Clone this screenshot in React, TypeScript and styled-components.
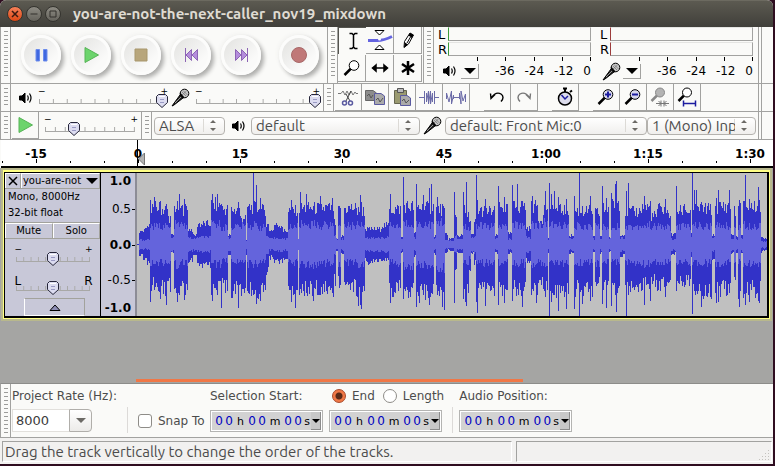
import React from 'react';
import styled, { createGlobalStyle, css } from 'styled-components';

const ui = '"Ubuntu", "Noto Sans", "Open Sans", sans-serif';
const mono = '"DejaVu Sans", sans-serif';
const line = '#a2a2a0';
const paper = '#fafaf8';
const lilac = '#c8c8d8';

const uri = (s: string) => `url("data:image/svg+xml,${encodeURIComponent(s)}")`;
const thumbArt = uri(
  '<svg xmlns="http://www.w3.org/2000/svg" width="12" height="14"><path d="M2.5 .5H9.5L11.5 2.5V8.5L6 13.5L.5 8.5V2.5Z" fill="#dcdcf0" stroke="#26263a"/><path d="M3 2.5H9" stroke="#fff"/><path d="M4 5.5H8M4 8.5H8" stroke="#9a9ac4"/></svg>'
);
const arrowsArt = uri(
  '<svg xmlns="http://www.w3.org/2000/svg" width="20" height="15"><path d="M.5 1V14" stroke="#dcdad6"/><path d="M7 5L10 2L13 5ZM7 10L10 13L13 10Z" fill="#6c6a66"/></svg>'
);

const Global = createGlobalStyle`
  * { box-sizing: border-box; }
  body { margin: 0; background: #2f0d20; font-family: ${mono}; font-size: 12px; color: #000; }
  button, input, select { font: inherit; color: inherit; margin: 0; padding: 0; border: 0; border-radius: 0; }
  svg { display: block; flex: none; }
`;

const Desktop = styled.div`
  min-height: 100vh;
  display: flex;
  padding: 0 2px 2px 0;
  background: #2f0d20;
`;
const Frame = styled.main`
  flex: 1;
  min-width: 0;
  display: flex;
  flex-direction: column;
  background: ${paper};
  border-radius: 6px 6px 0 0;
  overflow: hidden;
`;
const TitleBar = styled.header`
  height: 27px;
  flex: none;
  display: flex;
  align-items: center;
  gap: 3px;
  padding-left: 7px;
  background: linear-gradient(#5c5a51, #403f3a);
  border-top: 1px solid #6c6a60;
`;
const Title = styled.h1`
  margin: 0 0 0 9px;
  font: bold 15px/20px ${ui};
  color: #dfdbd2;
  white-space: nowrap;
`;
const WinButton = styled.button<{ $close?: boolean }>`
  width: 16px;
  height: 16px;
  border-radius: 50%;
  border: 1px solid #35342f;
  background: ${p => (p.$close ? 'linear-gradient(#f58059, #dd4814)' : 'linear-gradient(#8d8b83, #65635c)')};
  display: grid;
  place-items: center;
`;

const Row = styled.div<{ $h: number }>`
  height: ${p => p.$h}px;
  flex: none;
  display: flex;
  border-bottom: 1px solid ${line};
  border-left: 1px solid ${line};
`;
const Grip = styled.div`
  width: 10px;
  flex: none;
  border-right: 1px solid ${line};
  padding: 4px 2px 4px 3px;
  background: repeating-linear-gradient(#9c9c9a 0 1px, #fafaf8 1px 4px) content-box;
`;
const Bar = styled.div<{ $grow?: boolean; $pad?: string; $gap?: number; $open?: boolean }>`
  display: flex;
  align-items: center;
  min-width: 0;
  flex: ${p => (p.$grow ? '1 1 0' : 'none')};
  padding: ${p => p.$pad || '0'};
  gap: ${p => p.$gap || 0}px;
  border-right: ${p => (p.$open ? '0' : `1px solid ${line}`)};
`;
const Tail = styled.div`
  width: 12px;
  flex: none;
  margin-left: 2px;
  border-left: 1px solid ${line};
`;
const RoundButton = styled.button<{ $apart?: boolean }>`
  width: 40px;
  height: 40px;
  border-radius: 50%;
  border: 3px solid #fcfcfb;
  background: linear-gradient(135deg, #e2e2e0, #fafaf9 75%);
  box-shadow: 3px 3px 4px #aeaeac, -1px -1px 4px #f0f0ee;
  display: grid;
  place-items: center;
  margin-left: ${p => (p.$apart ? 8 : 0)}px;
`;
const ToolGrid = styled.div`
  display: grid;
  grid-template-columns: repeat(3, 28px);
  grid-template-rows: repeat(2, 28px);
`;
const Tool = styled.button<{ $on?: boolean }>`
  min-width: 27px;
  height: 27px;
  background: ${paper};
  border-right: 1px solid ${line};
  border-bottom: 1px solid ${line};
  display: grid;
  place-items: center;
  ${p => p.$on && css`border: 0; border-left: 1px solid #55554f; border-top: 1px solid #55554f;`}
`;
const ToolSet = styled.div<{ $gap?: boolean }>`
  display: flex;
  margin-left: ${p => (p.$gap ? 14 : 0)}px;
`;

const MeterBox = styled.section`
  flex: 1;
  min-width: 0;
  align-self: stretch;
  padding: 0 5px 0 4px;
`;
const Channel = styled.div`
  display: flex;
  align-items: center;
  height: 15px;
  font: 13px/14px ${mono};
`;
const ChannelName = styled.span`
  width: 10px;
`;
const Level = styled.div<{ $c: string }>`
  flex: 1;
  height: 14px;
  align-self: flex-start;
  border: 1px solid ${line};
  border-top-color: #e4e4e2;
  border-left-color: ${p => p.$c};
`;
const Ticks = styled.div`
  display: flex;
  height: 4px;
  margin-left: 12px;
  & > i { flex: 1; border-right: 1px solid #000; }
`;
const ScaleRow = styled.div`
  display: flex;
  align-items: center;
  height: 20px;
`;
const IconCell = styled.span`
  width: 23px;
  flex: none;
  display: grid;
  place-items: center;
`;
const Scale = styled.div`
  flex: 1;
  display: flex;
  justify-content: space-between;
  padding-left: 16px;
  font: 12px/16px ${mono};
`;
const DropButton = styled.button`
  width: 18px;
  height: 15px;
  background: ${paper};
  border-right: 1px solid ${line};
  border-bottom: 1px solid ${line};
  display: grid;
  place-items: center;
`;

const SliderBox = styled.label<{ $w: number }>`
  display: grid;
  grid-template-columns: 100%;
  width: ${p => p.$w}px;
  flex: none;
  height: 20px;
`;
const SliderEnds = styled.span<{ $big?: boolean }>`
  grid-area: 1 / 1;
  display: flex;
  justify-content: space-between;
  padding: 0 3px 0 5px;
  font: ${p => (p.$big ? '12px/12px' : '9px/7px')} ${mono};
  z-index: 1;
  pointer-events: none;
`;
const SliderTrack = styled.span<{ $n: number }>`
  grid-area: 1 / 1;
  align-self: end;
  display: flex;
  height: 14px;
  padding: 5px 6px 4px;
  background:
    linear-gradient(#a8a8a6, #a8a8a6) left bottom / 100% 1px no-repeat,
    linear-gradient(90deg, #a8a8a6 1px, transparent 1px) left top / calc((100% - 1px) / ${p => p.$n}) 100% repeat-x;
  background-origin: content-box;
  background-clip: content-box;
`;
const Range = styled.input`
  appearance: none;
  flex: 1;
  min-width: 0;
  height: 14px;
  margin: -5px -6px -4px;
  background: transparent;
  &::-webkit-slider-thumb {
    appearance: none;
    width: 12px;
    height: 14px;
    background: ${thumbArt} no-repeat;
  }
`;
const Slider = ({ name, w, value, n, ends = ['−', '+'], big }: {
  name: string; w: number; value: number; n: number; ends?: string[]; big?: boolean;
}) => (
  <SliderBox $w={w}>
    <SliderEnds $big={big}><span>{ends[0]}</span><span>{ends[1]}</span></SliderEnds>
    <SliderTrack $n={n}><Range type="range" aria-label={name} defaultValue={value} /></SliderTrack>
  </SliderBox>
);

const Select = styled.select<{ $w: number }>`
  appearance: none;
  flex: 1 1 ${p => p.$w}px;
  min-width: 0;
  height: 18px;
  padding: 0 20px 0 4px;
  border: 1px solid #b4b2ae;
  border-radius: 4px;
  background: ${arrowsArt} right 1px center no-repeat, linear-gradient(#fff, #f0efed);
  font: 15px/16px ${ui};
  color: #4c4c4c;
`;

const Ruler = styled.div`
  height: 28px;
  flex: none;
  display: flex;
  overflow: hidden;
  margin-left: 1px;
  padding: 7px 0 3px;
  background: #fff;
  border-bottom: 2px solid #000;
  position: relative;
`;
const Mark = styled.span`
  flex: none;
  width: 102px;
  text-align: center;
  font: bold 12px/15px ${mono};
  background:
    linear-gradient(#000, #000) 51px bottom / 1px 4px no-repeat,
    linear-gradient(#000, #000) 17px bottom / 1px 2px no-repeat,
    linear-gradient(#000, #000) 85px bottom / 1px 2px no-repeat;
  &:first-child { margin-left: -16px; }
`;
const Cursor = styled.svg`
  position: absolute;
  left: 136px;
  top: 0;
`;

const TrackArea = styled.div`
  flex: 1;
  background: #a5a5a3;
  display: flex;
  flex-direction: column;
`;
const Track = styled.section`
  display: flex;
  height: 153px;
  margin: 0 1px 0 1px;
  background: #000;
  border: 1px solid #b8b88c;
  padding: 1px;
  box-shadow: inset 0 0 0 1px #b8b88c;
`;
const TrackInner = styled.div`
  flex: 1;
  min-width: 0;
  display: flex;
  border: 1px solid #ffff84;
  border-top-width: 2px;
  background: #000;
  padding: 1px 2px 2px 1px;
`;
const Panel = styled.div`
  width: 95px;
  flex: none;
  background: ${lilac};
  font: 10px/16px ${mono};
  display: flex;
  flex-direction: column;
  align-items: stretch;
`;
const PanelRow = styled.div`
  display: flex;
  height: 16px;
  flex: none;
  border-bottom: 1px solid #a2a29c;
`;
const PanelButton = styled.button<{ $w?: number }>`
  ${p => (p.$w ? css`width: ${p.$w}px; flex: none;` : css`flex: 1;`)}
  min-width: 0;
  display: flex;
  align-items: center;
  justify-content: center;
  gap: 5px;
  background: ${lilac};
  border: 1px solid #fff;
  border-right-color: #a2a29c;
  border-bottom: 0;
  white-space: nowrap;
  line-height: 12px;
`;
const Info = styled.div`
  padding: 0 0 1px 3px;
  border-bottom: 1px solid #a2a29c;
`;
const PanelSliders = styled.div`
  display: flex;
  flex-direction: column;
  align-items: center;
  padding-top: 7px;
  gap: 9px;
  flex: 1;
`;
const Collapse = styled.button`
  width: 61px;
  height: 18px;
  flex: none;
  margin-left: 4px;
  align-self: center;
  background: ${lilac};
  border: 1px solid #fff;
  border-right-color: #a2a29c;
  border-top-color: #a2a29c;
  display: grid;
  place-items: center;
`;
const Amplitude = styled.div`
  width: 36px;
  flex: none;
  margin-left: 1px;
  background: ${lilac};
  border-right: 2px solid #8c8c96;
  display: flex;
  flex-direction: column;
  font: 12px/16px ${mono};
`;
const AmpMiddle = styled.div`
  flex: 1;
  margin: 12px 0;
  display: flex;
  flex-direction: column;
  justify-content: space-between;
`;
const Amp = styled.span<{ $strong?: boolean; $tick?: boolean }>`
  display: block;
  text-align: right;
  padding-right: 4px;
  font-weight: ${p => (p.$strong ? 'bold' : 'normal')};
  background: ${p => (p.$tick ? 'linear-gradient(#000, #000) right 8px / 3px 1px no-repeat' : 'none')};
`;
const WaveSvg = styled.svg`
  flex: 1 1 0;
  min-width: 0;
  height: 100%;
  background: #c0c0c0;
`;
const ScrollBar = styled.div`
  height: 3px;
  width: 50%;
  margin: auto 0 1px 136px;
  background: #f07746;
`;

// [start, end, peak above, peak below, rms] in canvas units
const segments: number[][] = [
  [140, 144, 13, 13, 4], [144, 148, 16, 16, 4], [148, 151, 20, 20, 5], [151, 161, 42, 45, 18],
  [161, 169, 40, 48, 18], [169, 172, 30, 45, 16], [172, 175, 10, 9, 6], [175, 182, 42, 50, 20],
  [182, 189, 40, 48, 19], [189, 194, 17, 17, 6], [194, 198, 10, 10, 5], [198, 212, 23, 22, 7],
  [212, 222, 45, 50, 20], [222, 229, 40, 46, 17], [229, 232, 10, 10, 6], [232, 241, 39, 50, 18],
  [241, 247, 30, 52, 18], [247, 248, 4, 10, 4], [248, 260, 42, 52, 19], [260, 267, 39, 50, 17],
  [267, 270, 22, 30, 8], [270, 275, 16, 14, 5], [275, 284, 22, 18, 6], [284, 289, 15, 17, 5],
  [289, 299, 39, 50, 18], [299, 300, 5, 6, 4], [300, 318, 41, 49, 20], [318, 335, 41, 50, 19],
  [335, 337, 24, 40, 10], [337, 339, 6, 7, 5], [339, 342, 38, 44, 20], [342, 345, 9, 9, 5],
  [345, 357, 41, 46, 19], [357, 366, 38, 56, 21], [366, 382, 17, 19, 6], [382, 390, 21, 18, 7],
  [390, 402, 40, 50, 18], [402, 404, 8, 8, 5], [404, 415, 43, 51, 21], [415, 417, 12, 12, 6],
  [417, 435, 42, 55, 20], [435, 437, 10, 10, 5], [437, 446, 40, 55, 23], [446, 449, 11, 8, 4],
  [449, 454, 6, 6, 3], [454, 457, 34, 28, 8], [457, 463, 10, 9, 5], [463, 469, 38, 54, 18],
  [469, 471, 24, 36, 12], [471, 474, 10, 9, 6], [474, 476, 25, 20, 8], [476, 485, 38, 50, 19],
  [485, 495, 37, 50, 18], [495, 498, 10, 9, 5], [498, 508, 41, 52, 18], [508, 512, 12, 9, 5],
  [512, 526, 43, 49, 19], [526, 531, 18, 18, 7], [531, 538, 43, 50, 20], [538, 543, 28, 38, 18],
  [543, 548, 42, 48, 22], [548, 549, 6, 8, 4], [549, 569, 39, 51, 19], [569, 574, 10, 10, 5],
  [574, 593, 38, 49, 18], [593, 595, 8, 9, 5], [595, 600, 36, 45, 19], [600, 602, 9, 9, 5],
  [602, 609, 40, 46, 17], [609, 611, 8, 8, 5], [611, 620, 46, 50, 18], [620, 625, 11, 12, 6],
  [625, 640, 37, 46, 18], [640, 651, 42, 45, 19], [651, 657, 32, 40, 18], [657, 665, 40, 45, 18],
  [665, 671, 35, 40, 17], [671, 676, 11, 10, 5], [676, 691, 38, 40, 18], [691, 692, 12, 12, 8],
  [692, 700, 42, 50, 19], [700, 712, 40, 52, 18], [712, 715, 10, 14, 6], [715, 731, 43, 50, 19],
  [731, 734, 11, 10, 5], [734, 736, 38, 42, 17], [736, 738, 8, 8, 5], [738, 741, 42, 55, 18],
  [741, 743, 10, 10, 6], [743, 761, 43, 50, 19], [761, 763, 7, 9, 3], [763, 767, 7, 6, 3],
];
const spikes: Record<number, [number, number]> = {
  151: [44, 57], 155: [47, 45], 161: [43, 54], 167: [40, 60], 178: [43, 57], 180: [50, 50], 185: [45, 55],
  213: [50, 56], 218: [50, 50], 222: [40, 63], 239: [42, 63], 254: [71, 50], 257: [59, 59], 261: [46, 56],
  292: [44, 57], 296: [39, 63], 301: [52, 44], 307: [50, 48], 314: [38, 56], 321: [48, 50], 333: [46, 48],
  359: [37, 61], 361: [49, 60], 362: [42, 64], 391: [50, 58], 404: [67, 54], 417: [60, 62], 424: [49, 50],
  430: [56, 60], 432: [60, 48], 438: [47, 50], 443: [40, 62], 445: [36, 65], 454: [52, 58], 463: [52, 54],
  466: [62, 61], 476: [69, 57], 477: [44, 68], 485: [45, 61], 498: [58, 60], 504: [47, 58], 512: [59, 56],
  517: [60, 44], 522: [43, 62], 532: [48, 44], 536: [38, 58], 545: [53, 52], 549: [61, 71], 551: [50, 57],
  554: [53, 50], 558: [47, 66], 566: [45, 64], 574: [48, 64], 579: [71, 71], 582: [38, 59], 590: [48, 56],
  602: [58, 59], 606: [46, 63], 611: [51, 61], 615: [60, 50], 616: [63, 67], 618: [43, 43], 626: [53, 71],
  628: [61, 50], 644: [48, 60], 650: [43, 56], 665: [45, 52], 676: [58, 46], 684: [40, 42], 692: [71, 69],
  694: [54, 46], 696: [54, 46], 701: [42, 62], 716: [46, 58], 718: [54, 57], 729: [54, 48], 739: [44, 62],
  745: [69, 60], 749: [45, 57], 758: [57, 56], 759: [44, 58],
};
const noise = (x: number) => {
  const v = Math.sin(x * 12.9898) * 43758.5453;
  return v - Math.floor(v);
};
let peaks = '';
let rms = '';
segments.forEach(([a, b, up, down, r]) => {
  for (let x = a; x < b; x++) {
    const s = spikes[x];
    const t = s ? s[0] : up * (0.7 + 0.34 * noise(x));
    const d = s ? s[1] : down * (0.7 + 0.36 * noise(x + 400));
    const px = x - 137.5;
    peaks += `M${px} ${Math.round(71 - t)}V${Math.round(72 + d)}`;
    rms += `M${px} ${Math.round(71 - r * (0.75 + 0.45 * noise(x + 900)))}V${Math.round(72 + r * (0.75 + 0.45 * noise(x + 1300)))}`;
  }
});
const Wave = () => (
  <WaveSvg viewBox="0 0 629 143" preserveAspectRatio="none" shapeRendering="crispEdges" aria-label="Waveform">
    <path d="M0 71.5H3" stroke="#3232c8" />
    <path d={peaks} stroke="#3232c8" fill="none" />
    <path d={rms} stroke="#6464dc" fill="none" />
  </WaveSvg>
);

const Footer = styled.footer`
  height: 55px;
  flex: none;
  display: flex;
  border: 1px solid ${line};
  border-right: 0;
  border-top-color: #8c8c8a;
  font: 12px/16px ${mono};
  color: #4c4c4c;
`;
const Field = styled.div<{ $w?: number }>`
  display: flex;
  flex-direction: column;
  justify-content: space-between;
  width: ${p => (p.$w ? `${p.$w}px` : 'auto')};
  flex: none;
  padding: 4px 0 5px 1px;
  white-space: nowrap;
`;
const Line = styled.div<{ $h?: number }>`
  display: flex;
  align-items: center;
  height: ${p => p.$h || 16}px;
`;
const Combo = styled.div`
  display: flex;
  width: 80px;
  height: 23px;
`;
const RateInput = styled.input`
  flex: 1;
  min-width: 0;
  padding-left: 3px;
  background: #fff;
  border: 1px solid #e2e0dc;
  border-right: 0;
  font: 13px/20px ${mono};
  color: #3c3c3c;
`;
const ComboButton = styled.button`
  width: 23px;
  border: 1px solid #b0aeaa;
  border-radius: 0 4px 4px 0;
  background: linear-gradient(#fff, #ecebe9);
  display: grid;
  place-items: center;
`;
const Rule = styled.div<{ $pad: string }>`
  width: 1px;
  flex: none;
  align-self: flex-end;
  height: 26px;
  margin: ${p => p.$pad};
  background: #dcdad8;
`;
const Check = styled.input<{ $round?: boolean }>`
  appearance: none;
  width: 14px;
  height: 14px;
  flex: none;
  margin-right: 6px;
  border: 1px solid #8e8c88;
  border-radius: ${p => (p.$round ? '50%' : '3px')};
  background: #fff;
  &:checked {
    border-color: #a8492a;
    background: radial-gradient(circle, #5a2a18 0 3px, #f07746 4px);
  }
`;
const Option = styled.label`
  display: flex;
  align-items: center;
`;
const TimeBox = styled.div`
  display: flex;
  width: 113px;
  height: 22px;
  padding: 1px;
  border: 1px solid #b4b4b2;
  background: #fff;
`;
const TimeText = styled.div`
  flex: 1;
  display: flex;
  padding-left: 2px;
  background: #d2d2d2;
  font: 12px/19px ${mono};
  color: #000;
`;
const Digit = styled.span`
  width: 10px;
  text-align: center;
  color: #0000c0;
`;
const Unit = styled.span<{ $w: number }>`
  width: ${p => p.$w}px;
  text-align: center;
  font-size: 11px;
`;
const TimeDrop = styled.button`
  width: 10px;
  background: #c8c8c8;
  border-right: 1px solid #8c8c8c;
  border-bottom: 1px solid #8c8c8c;
  display: grid;
  place-items: center;
`;
const Status = styled.div`
  height: 26px;
  flex: none;
  display: flex;
  gap: 4px;
  padding: 3px 1px 2px 2px;
  background: #f2f1f0;
`;
const Pane = styled.div<{ $w: number }>`
  flex: ${p => p.$w} 1 0;
  min-width: 0;
  display: flex;
  justify-content: ${p => (p.$w < 300 ? 'flex-end' : 'flex-start')};
  align-items: ${p => (p.$w < 300 ? 'flex-end' : 'center')};
  border: 1px solid #a2a2a0;
  border-right-color: #fff;
  border-bottom-color: #fff;
  padding-left: 2px;
  font: 15px/19px ${ui};
  color: #4c4c4c;
  white-space: nowrap;
`;

const Down = ({ w = 12, c = '#000' }: { w?: number; c?: string }) => (
  <svg width={w} height={w / 2} viewBox="0 0 12 6"><path d="M0 0H12L6 6Z" fill={c} /></svg>
);
const Speaker = () => (
  <svg width="14" height="14" viewBox="0 0 14 14" fill="none" stroke="#000">
    <path d="M.5 5H3L6 2V12L3 9H.5Z" fill="#000" />
    <path d="M8.5 4.5Q10 7 8.5 9.5M10.5 2.5Q13.5 7 10.5 11.5" strokeWidth="1.2" />
  </svg>
);
const Mic = () => (
  <svg width="19" height="19" viewBox="0 0 19 19">
    <path d="M1 18L9 7L12 10L3 17Z" fill="#222" stroke="#000" />
    <path d="M4 15L10 9" stroke="#999" />
    <circle cx="13.5" cy="5.5" r="4.3" fill="#c8c8c8" stroke="#000" />
    <path d="M11 4L15 8M12 2.5L16.5 7M11 7L15.5 3" stroke="#777" strokeWidth=".8" />
    <path d="M9 5.5L13 10" stroke="#000" strokeWidth="1.5" />
  </svg>
);
const Lens = ({ kind, grey }: { kind?: 'plus' | 'minus' | 'sel' | 'fit'; grey?: boolean }) => (
  <svg width="20" height="20" viewBox="0 0 20 20" fill="none">
    <path d={kind === 'sel' || kind === 'fit' ? 'M1.5 14L7 8.5' : 'M2.5 17L9 10.5'} stroke={grey ? '#888' : '#000'} strokeWidth="2.5" />
    {kind === 'sel' || kind === 'fit'
      ? <circle cx="10" cy="5.5" r="4.5" fill={grey ? '#b4b4b4' : '#fff'} stroke={grey ? '#888' : '#000'} />
      : <circle cx="12" cy="7.5" r="4.8" fill={kind ? '#d8d8ec' : '#fff'} stroke="#000" />}
    {kind === 'plus' && <path d="M9 7.5H15M12 4.5V10.5" stroke="#1c1ca0" strokeWidth="2" />}
    {kind === 'minus' && <path d="M9 7.5H15" stroke="#1c1ca0" strokeWidth="2" />}
    {kind === 'sel' && <path d="M6 16.5H19M11 13.5V19.5M14 13.5V19.5M8.500 14L11 16.500L8.500 19M16.500 14L14 16.500L16.500 19" stroke="#777" />}
    {kind === 'fit' && <path d="M6.500 13.500V19.500M18.500 13.500V19.500M7 16.500H18" stroke="#1c1ca0" strokeWidth="1.500" />}
  </svg>
);
const Draw = ({ d, c = '#000', w = 1, f = 'none', s = 20 }: { d: string; c?: string; w?: number; f?: string; s?: number }) => (
  <svg width={s} height={s} viewBox="0 0 20 20"><path d={d} stroke={c} strokeWidth={w} fill={f} /></svg>
);
const Play = ({ s = 20 }: { s?: number }) => <Draw s={s} d="M4 2.500L17.500 10L4 17.500Z" f="#6cd46c" c="#56b456" />;

const Meter = ({ name, color, icon }: { name: string; color: string; icon: React.ReactNode }) => (
  <MeterBox aria-label={name}>
    <Channel><ChannelName>L</ChannelName><Level $c={color} /></Channel>
    <Channel><ChannelName>R</ChannelName><Level $c={color} /></Channel>
    <Ticks><i /><i /><i /><i /><i /></Ticks>
    <ScaleRow>
      <IconCell>{icon}</IconCell>
      <DropButton aria-label={`${name} menu`}><Down /></DropButton>
      <Scale><span>-36</span><span>-24</span><span>-12</span><span>0</span></Scale>
    </ScaleRow>
  </MeterBox>
);
const Time = ({ name }: { name: string }) => (
  <TimeBox role="group" aria-label={name}>
    <TimeText>
      <Digit>0</Digit><Digit>0</Digit><Unit $w={13}>h</Unit>
      <Digit>0</Digit><Digit>0</Digit><Unit $w={16}>m</Unit>
      <Digit>0</Digit><Digit>0</Digit><Unit $w={8}>s</Unit>
    </TimeText>
    <TimeDrop aria-label="Format"><Down w={8} /></TimeDrop>
  </TimeBox>
);

export default function App() {
  return (
    <Desktop>
      <Global />
      <Frame>
        <TitleBar>
          <WinButton $close aria-label="Close"><Draw s={10} d="M4 4L16 16M16 4L4 16" c="#3a1a10" w={3} /></WinButton>
          <WinButton aria-label="Minimize"><Draw s={10} d="M3 10H17" c="#32312c" w={2} /></WinButton>
          <WinButton aria-label="Maximize"><Draw s={10} d="M4 4H16V16H4Z" c="#32312c" w={2} /></WinButton>
          <Title>you-are-not-the-next-caller_nov19_mixdown</Title>
        </TitleBar>

        <Row $h={57}>
          <Grip />
          <Bar $pad="0 8px 0 10px" $gap={10}>
            <RoundButton aria-label="Pause"><Draw d="M5 4.500H8.500V16H5ZM12.500 4.500H16V16H12.500Z" f="#4068e0" c="#6c8cec" /></RoundButton>
            <RoundButton aria-label="Play"><Play /></RoundButton>
            <RoundButton aria-label="Stop"><Draw d="M4 4H16V16H4Z" f="#b8a67c" c="#a8976c" /></RoundButton>
            <RoundButton aria-label="Skip to start"><Draw d="M4.500 3V17M10.500 4.500V15.500L5 10ZM16.500 4.500V15.500L11 10Z" f="#b48cdc" c="#8c64b4" /></RoundButton>
            <RoundButton aria-label="Skip to end"><Draw d="M16.500 3V17M10.500 4.500V15.500L16 10ZM4.500 4.500V15.500L10 10Z" f="#b48cdc" c="#8c64b4" /></RoundButton>
            <RoundButton $apart aria-label="Record"><svg width="18" height="18"><circle cx="9" cy="9" r="7.500" fill="#c07878" stroke="#a86868" /></svg></RoundButton>
          </Bar>
          <Grip />
          <Bar $pad="0 1px 0 0">
            <ToolGrid>
              <Tool $on aria-label="Selection"><Draw d="M6.500 2.500H9L10.500 4L12 2.500H14.500M10.500 4V16M6.500 17.500H9L10.500 16L12 17.500H14.500" w={1.5} /></Tool>
              <Tool aria-label="Envelope">
                <svg width="26" height="22" viewBox="0 0 26 22">
                  <path d="M1 11.500H10Q17 11.500 25 7.500" stroke="#6464e0" strokeWidth="3" fill="none" />
                  <path d="M8 1.500H17L12.500 6ZM8 20.500H17L12.500 16Z" fill="#fff" stroke="#000" />
                  <circle cx="12.500" cy="10" r="1.500" fill="#fff" />
                </svg>
              </Tool>
              <Tool aria-label="Draw">
                <svg width="20" height="20" viewBox="0 0 20 20">
                  <path d="M6 17.500L6.500 11.500L12 3L15.500 5L10.500 14Z" fill="#fff" stroke="#000" />
                  <path d="M6 17.500L7 12.500L10 14.500ZM12 3L15.500 5L14 8L10.500 5.500Z" /><path d="M12.500 7L9 13" stroke="#000" />
                </svg>
              </Tool>
              <Tool aria-label="Zoom"><Lens /></Tool>
              <Tool aria-label="Time shift"><Draw d="M3 10H17M6 7L2.500 10L6 13ZM14 7L17.500 10L14 13Z" f="#000" w={1.5} /></Tool>
              <Tool aria-label="Multi-tool"><Draw d="M10 3V17M4 6L16 14M16 6L4 14" w={2.5} /></Tool>
            </ToolGrid>
          </Bar>
          <Grip />
          <Bar $grow>
            <Meter name="Playback level" color="#3c9c3c" icon={<Speaker />} />
            <Meter name="Recording level" color="#9c3c3c" icon={<Mic />} />
          </Bar>
          <Tail />
        </Row>

        <Row $h={28}>
          <Grip />
          <Bar $pad="0 0 0 8px">
            <Speaker />
            <Slider name="Output volume" w={138} value={98} n={9} />
            <Mic />
            <Slider name="Input volume" w={133} value={98} n={9} />
          </Bar>
          <Grip />
          <Bar $grow $pad="0 0 0 1px">
            <ToolSet>
              <Tool aria-label="Cut">
                <svg width="20" height="20" viewBox="0 0 20 20" fill="none">
                  <path d="M0 6.500H3L5 4L7 8L9 4L11 8L13 4L15 8L17 5L18 6.500H20" stroke="#777" />
                  <path d="M13 4L8 14M8 7L12 14" stroke="#444" /><circle cx="6.500" cy="16" r="2" stroke="#5a5aa0" strokeWidth="1.500" /><circle cx="12.500" cy="16" r="2" stroke="#5a5aa0" strokeWidth="1.500" />
                </svg>
              </Tool>
              <Tool aria-label="Copy">
                <svg width="20" height="20" viewBox="0 0 20 20">
                  <path d="M.5 3.500H8L11.500 6V13.500H.5Z" fill="#8c8c8c" stroke="#666" /><path d="M9.500 6.500H16L19.500 9V17.500H9.500Z" fill="#aaa" stroke="#5a5aa0" />
                  <path d="M2 9L4 7L6 11L8 8M11 13L13 11L15 15L18 11" stroke="#555" fill="none" />
                </svg>
              </Tool>
              <Tool aria-label="Paste">
                <svg width="20" height="20" viewBox="0 0 20 20">
                  <path d="M2.500 3.500H14.500V16.500H2.500Z" fill="#9a9a70" stroke="#666650" /><path d="M5.500 1.500H11.500V5.500H5.500Z" fill="#bbb" stroke="#555" />
                  <path d="M8.500 8.500H15L18.500 11V18.500H8.500Z" fill="#aaa" stroke="#5a5aa0" /><path d="M10 14L12 12L14 16L17 13" stroke="#555" fill="none" />
                </svg>
              </Tool>
              <Tool aria-label="Trim"><Draw d="M0 10.500H5M5.500 4V17M7.500 6V15L9.500 4V17L11.500 4V17L13.500 6V15M15.500 4V17M15 10.500H20" c="#6c6ca8" /></Tool>
              <Tool aria-label="Silence"><Draw d="M.5 12V6L3 15L5.500 4V17L7.500 8V12M7 10.500H13M13.500 12V6L15 17V4L17 14L19.500 7V15" c="#6c6ca8" /></Tool>
            </ToolSet>
            <ToolSet $gap>
              <Tool aria-label="Undo"><Draw d="M8 7.500L4 11.500L3.500 6.500M4 11Q9 4 14 7Q18 10 14 14.500" w={1.4} /></Tool>
              <Tool aria-label="Redo"><Draw d="M12 7.500L16 11.500L16.500 6.500M16 11Q11 4 6 7Q2 10 6 14.500" w={1.4} c="#777" /></Tool>
            </ToolSet>
            <ToolSet $gap>
              <Tool aria-label="Sync-lock">
                <svg width="20" height="20" viewBox="0 0 20 20" fill="none" stroke="#000">
                  <circle cx="10" cy="11.500" r="6.500" fill="#dcdcec" strokeWidth="1.500" /><path d="M8 1.500H12M10 2V5M15 5L17 3.500" strokeWidth="2" /><path d="M6.500 8L10 12L13 9" stroke="#1c1ca0" strokeWidth="1.500" />
                </svg>
              </Tool>
            </ToolSet>
            <ToolSet $gap>
              <Tool aria-label="Zoom in"><Lens kind="plus" /></Tool>
              <Tool aria-label="Zoom out"><Lens kind="minus" /></Tool>
              <Tool aria-label="Fit selection"><Lens kind="sel" grey /></Tool>
              <Tool aria-label="Fit project"><Lens kind="fit" /></Tool>
            </ToolSet>
          </Bar>
          <Tail />
        </Row>

        <Row $h={28}>
          <Grip />
          <Bar $pad="0 0 0 1px">
            <Tool aria-label="Play at speed"><Play /></Tool>
            <Slider name="Playback speed" w={102} value={32} n={9} />
          </Bar>
          <Grip />
          <Bar $grow $pad="0 2px 0 2px">
            <Select $w={71} aria-label="Audio host"><option>ALSA</option></Select>
            <Bar $open $pad="0 5px 0 7px"><Speaker /></Bar>
            <Select $w={169} aria-label="Output device"><option>default</option></Select>
            <Bar $open $pad="0 3px 0 3px"><Mic /></Bar>
            <Select $w={202} aria-label="Input device"><option>default: Front Mic:0</option></Select>
            <Select $w={109} aria-label="Input channels"><option>1 (Mono) Input Channel</option></Select>
          </Bar>
          <Tail />
        </Row>

        <Ruler>
          {['-15', '0', '15', '30', '45', '1:00', '1:15', '1:30'].map(t => <Mark key={t}>{t}</Mark>)}
          <Cursor width="10" height="26"><path d="M.5 0V26" stroke="#000" /><path d="M7.500 13V25L1.500 19Z" fill="#b4b4b4" stroke="#777" /></Cursor>
        </Ruler>

        <TrackArea>
          <Track>
            <TrackInner>
              <Panel>
                <PanelRow>
                  <PanelButton $w={16} aria-label="Close track"><Draw s={10} d="M2 2L18 18M18 2L2 18" w={3} /></PanelButton>
                  <PanelButton>you-are-not <Down /></PanelButton>
                </PanelRow>
                <Info>Mono, 8000Hz<br />32-bit float</Info>
                <PanelRow>
                  <PanelButton>Mute</PanelButton>
                  <PanelButton>Solo</PanelButton>
                </PanelRow>
                <PanelSliders>
                  <Slider name="Gain" w={86} value={50} n={10} />
                  <Slider name="Pan" w={86} value={50} n={10} ends={['L', 'R']} big />
                </PanelSliders>
                <Collapse aria-label="Collapse"><svg width="12" height="7"><path d="M1 6.500L6 1L11 6.500Z" fill="#8c8cb4" stroke="#000" /></svg></Collapse>
              </Panel>
              <Amplitude>
                <Amp $strong>1.0</Amp>
                <AmpMiddle>
                  <Amp $tick>0.5</Amp>
                  <Amp $strong $tick>0.0</Amp>
                  <Amp $tick>-0.5</Amp>
                </AmpMiddle>
                <Amp $strong>-1.0</Amp>
              </Amplitude>
              <Wave />
            </TrackInner>
          </Track>
          <ScrollBar />
        </TrackArea>

        <Footer>
          <Grip />
          <Field $w={116}>
            <Line as="label" htmlFor="rate">Project Rate (Hz):</Line>
            <Combo>
              <RateInput id="rate" defaultValue="8000" />
              <ComboButton aria-label="Rates"><Down w={10} c="#6c6a66" /></ComboButton>
            </Combo>
          </Field>
          <Rule $pad="0 9px 4px 0" />
          <Field $w={72}>
            <span />
            <Line $h={22}><Option><Check type="checkbox" />Snap To</Option></Line>
          </Field>
          <Field $w={119}>
            <Line>Selection Start:</Line>
            <Time name="Selection start" />
          </Field>
          <Field>
            <Line>
              <Bar $open $pad="0 0 0 3px" $gap={8}>
                <Option><Check $round type="radio" name="span" defaultChecked />End</Option>
                <Option><Check $round type="radio" name="span" />Length</Option>
              </Bar>
            </Line>
            <Time name="Selection end" />
          </Field>
          <Rule $pad="0 5px 4px 8px" />
          <Field>
            <Line>Audio Position:</Line>
            <Time name="Audio position" />
          </Field>
        </Footer>

        <Status>
          <Pane $w={511}>Drag the track vertically to change the order of the tracks.</Pane>
          <Pane $w={255}>
            <svg width="14" height="12" fill="#c4c2be"><path d="M11 1h1v1h-1zM8 4h1v1H8zM11 4h1v1h-1zM5 7h1v1H5zM8 7h1v1H8zM11 7h1v1h-1zM2 10h1v1H2zM5 10h1v1H5zM8 10h1v1H8zM11 10h1v1h-1z" /></svg>
          </Pane>
        </Status>
      </Frame>
    </Desktop>
  );
}
